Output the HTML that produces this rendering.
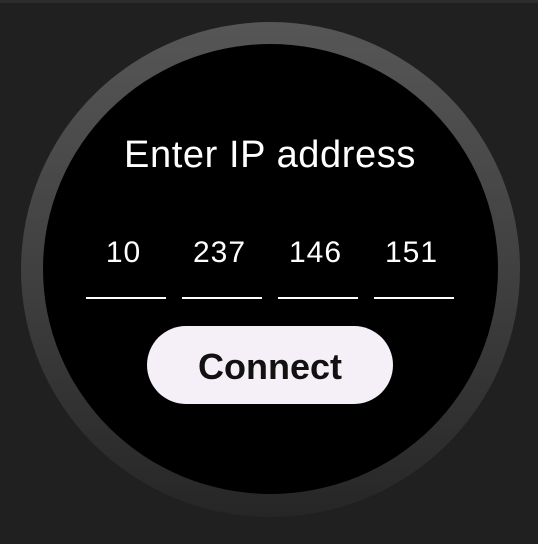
<!DOCTYPE html>
<html><head><style>
html,body{margin:0;padding:0}
body{width:538px;height:544px;background:#202020;position:relative;overflow:hidden;font-family:"Liberation Sans",sans-serif}
.top{position:absolute;left:0;top:0;width:538px;height:3px;background:#2c2c2e}
.ring{position:absolute;left:21px;top:22px;width:499px;height:495px;border-radius:50%;background:linear-gradient(#565656,#3e3e3e 55%,#262626)}
.inner{position:absolute;left:43px;top:44px;width:455px;height:450px;border-radius:50%;background:#000}
.t{position:absolute;color:#fff;text-align:center}
.line{position:absolute;top:297px;width:80px;height:2px;background:#fff}
.btn{position:absolute;left:147px;top:326px;width:246px;height:78px;border-radius:39px;background:#f5f0f8;color:#111;font-weight:bold;font-size:36px;text-align:center;line-height:82px}
</style></head><body>
<div class="top"></div>
<div class="ring"></div>
<div class="inner"></div>
<div class="t" style="left:0;width:540px;top:133px;font-size:38px;line-height:44px;letter-spacing:0.6px">Enter IP address</div>
<div class="t" style="left:86px;width:75px;top:236px;font-size:30px;letter-spacing:1px">10</div>
<div class="t" style="left:182px;width:75px;top:236px;font-size:30px;letter-spacing:1px">237</div>
<div class="t" style="left:278px;width:75px;top:236px;font-size:30px;letter-spacing:1px">146</div>
<div class="t" style="left:374px;width:75px;top:236px;font-size:30px;letter-spacing:1px">151</div>
<div class="line" style="left:86px"></div>
<div class="line" style="left:182px"></div>
<div class="line" style="left:278px"></div>
<div class="line" style="left:374px"></div>
<div class="btn">Connect</div>
</body></html>
